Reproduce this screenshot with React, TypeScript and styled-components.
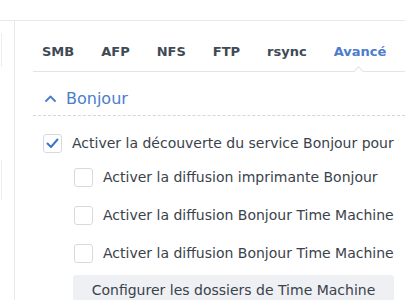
import React from 'react';
import styled, { createGlobalStyle } from 'styled-components';

const GlobalStyle = createGlobalStyle`
  body {
    margin: 0;
    background: #ffffff;
    font-family: 'DejaVu Sans', Verdana, sans-serif;
    color: #3a424b;
  }
  * {
    box-sizing: border-box;
  }
`;

const Page = styled.div`
  width: 405px;
  height: 300px;
  overflow: hidden;
  display: flex;
  flex-direction: column;
`;

const TopStrip = styled.div`
  height: 21px;
  flex-shrink: 0;
  border-bottom: 1px solid #e7e9ec;
`;

const Body = styled.div`
  display: flex;
  flex: 1;
`;

const Sidebar = styled.div`
  width: 15px;
  flex-shrink: 0;
  border-right: 1px solid #e7e9ec;
  display: flex;
  flex-direction: column;
  padding-top: 12px;
  gap: 93px;
`;

const SideItem = styled.div<{ $h: number }>`
  width: 2px;
  height: ${(p) => p.$h}px;
  border-right: 1px solid #eceef1;
`;

const Main = styled.div`
  flex: 1;
  padding-left: 18px;
  display: flex;
  flex-direction: column;
`;

const TabBar = styled.div`
  position: relative;
  display: flex;
  align-items: center;
  gap: 27px;
  height: 51px;
  padding: 10px 0 0 9px;
  border-bottom: 1px solid #e1e4e8;
`;

const Tab = styled.div<{ $active?: boolean }>`
  font-size: 13px;
  font-weight: bold;
  color: ${(p) => (p.$active ? '#4a7dcc' : '#414a54')};
  white-space: nowrap;
`;

const Notch = styled.div`
  position: absolute;
  left: 320px;
  bottom: -1px;
  width: 11px;
  height: 6px;
  overflow: hidden;
  &::before {
    content: '';
    position: absolute;
    left: 1px;
    top: 2px;
    width: 8px;
    height: 8px;
    background: #fff;
    border-left: 1px solid #dde0e4;
    border-top: 1px solid #dde0e4;
    transform: rotate(45deg);
  }
`;

const SectionHeader = styled.div`
  display: flex;
  align-items: center;
  gap: 10px;
  height: 44px;
  padding: 10px 0 0 12px;
  color: #4a7dcc;
  font-size: 16px;
  border-bottom: 1px dashed #d3d7dc;
`;

const Options = styled.div`
  display: flex;
  flex-direction: column;
  padding-top: 12px;
`;

const OptionRow = styled.label<{ $indent?: boolean; $h: number }>`
  display: flex;
  align-items: center;
  gap: 10px;
  height: ${(p) => p.$h}px;
  padding-left: ${(p) => (p.$indent ? '41px' : '10px')};
  font-size: 14px;
  color: #3a424b;
  white-space: nowrap;
`;

const Box = styled.span`
  width: 19px;
  height: 19px;
  flex-shrink: 0;
  border: 1px solid #d6dadf;
  border-radius: 3px;
  background: #fff;
  display: flex;
  align-items: center;
  justify-content: center;
`;

const Button = styled.div`
  margin: 3px 0 0 40px;
  width: 321px;
  height: 30px;
  flex-shrink: 0;
  border-radius: 3px;
  background: #eef0f3;
  display: flex;
  align-items: center;
  justify-content: center;
  font-size: 14px;
  color: #3a424b;
  white-space: nowrap;
`;

const Chevron = () => (
  <svg width="11" height="7" viewBox="0 0 11 7">
    <path d="M1 6 L5.5 1.5 L10 6" fill="none" stroke="#4a7dcc" strokeWidth="1.8" strokeLinecap="round" strokeLinejoin="round" />
  </svg>
);

const Check = () => (
  <svg width="13" height="11" viewBox="0 0 13 11">
    <path d="M1.5 5.5 L5 9 L11.5 1.5" fill="none" stroke="#3d74c9" strokeWidth="2" strokeLinecap="round" strokeLinejoin="round" />
  </svg>
);

const tabs = ['SMB', 'AFP', 'NFS', 'FTP', 'rsync', 'Avancé'];

const options = [
  { text: 'Activer la découverte du service Bonjour pour', checked: true, indent: false, h: 30 },
  { text: 'Activer la diffusion imprimante Bonjour', checked: false, indent: true, h: 38 },
  { text: 'Activer la diffusion Bonjour Time Machine', checked: false, indent: true, h: 38 },
  { text: 'Activer la diffusion Bonjour Time Machine', checked: false, indent: true, h: 38 },
];

const App = () => {
  return (
    <>
      <GlobalStyle />
      <Page>
        <TopStrip />
        <Body>
          <Sidebar>
            <SideItem $h={34} />
            <SideItem $h={40} />
          </Sidebar>
          <Main>
            <TabBar>
              {tabs.map((t) => (
                <Tab key={t} $active={t === 'Avancé'}>
                  {t}
                </Tab>
              ))}
              <Notch />
            </TabBar>
            <SectionHeader>
              <Chevron />
              Bonjour
            </SectionHeader>
            <Options>
              {options.map((o, i) => (
                <OptionRow key={i} $indent={o.indent} $h={o.h}>
                  <Box>{o.checked && <Check />}</Box>
                  {o.text}
                </OptionRow>
              ))}
            </Options>
            <Button>Configurer les dossiers de Time Machine</Button>
          </Main>
        </Body>
      </Page>
    </>
  );
};

export default App;
